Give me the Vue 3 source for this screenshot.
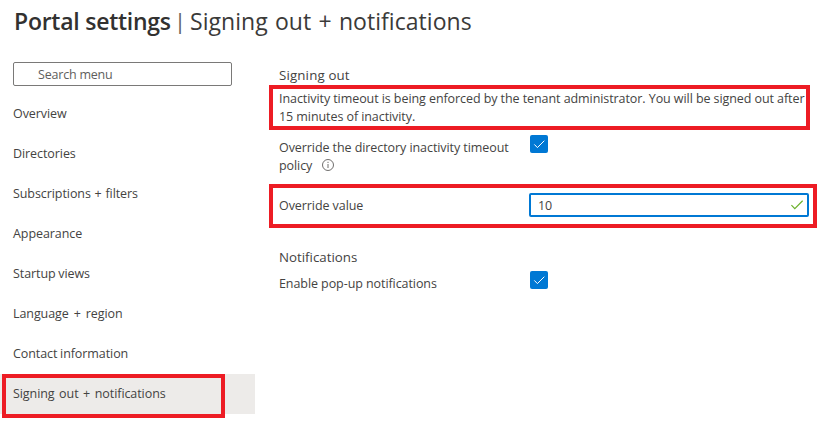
<script setup>
import { ref } from 'vue'

const menu = [
  { label: 'Overview', gap: 0 },
  { label: 'Directories', gap: 0 },
  { label: 'Subscriptions + filters', gap: 0.6 },
  { label: 'Appearance', gap: 0 },
  { label: 'Startup views', gap: -0.5 },
  { label: 'Language + region', gap: 1.8 },
  { label: 'Contact information', gap: -0.5 },
  { label: 'Signing out + notifications', gap: 1.4 },
]
const active = ref('Signing out + notifications')
</script>

<template>
  <div class="page">
    <h1 class="title">
      <strong>Portal settings</strong><span class="bar">|</span><span class="sub">Signing out + notifications</span>
    </h1>
    <div class="body">
      <nav class="side">
        <div class="search">Search menu</div>
        <div
          v-for="item in menu"
          :key="item.label"
          class="item"
          :class="{ active: item.label === active }"
          @click="active = item.label"
        >
          <span :style="{ wordSpacing: item.gap + 'px' }">{{ item.label }}</span>
          <i v-if="item.label === active" class="mark mark-menu"></i>
        </div>
      </nav>

      <main class="main">
        <h2 class="heading first">Signing out</h2>
        <p class="notice">
          Inactivity timeout is being enforced by the tenant administrator. You will be signed out after<br />
          15 minutes of inactivity.
          <i class="mark mark-notice"></i>
        </p>
        <div class="row policy">
          <div class="label">
            Override the directory inactivity timeout<br />policy
            <svg class="info" viewBox="0 0 12 12">
              <circle cx="6" cy="6" r="5.5" />
              <path d="M6 5v4M6 2.8v1.2" />
            </svg>
          </div>
          <div class="check">
            <svg viewBox="0 0 18 18"><path d="M4.3 9.4l3.1 3.2 6.9-6.9" /></svg>
          </div>
        </div>
        <div class="row override">
          <div class="label">Override value</div>
          <div class="field">
            <span>10</span>
            <svg viewBox="0 0 12 10"><path d="M.4 5.1l3.4 3.5L11.6.7" /></svg>
          </div>
          <i class="mark mark-value"></i>
        </div>
        <h2 class="heading second">Notifications</h2>
        <div class="row popup">
          <div class="label">Enable pop-up notifications</div>
          <div class="check">
            <svg viewBox="0 0 18 18"><path d="M4.3 9.4l3.1 3.2 6.9-6.9" /></svg>
          </div>
        </div>
      </main>
    </div>
  </div>
</template>

<style>
body {
  margin: 0;
  background: #fff;
}
</style>

<style scoped>
.page {
  box-sizing: border-box;
  width: 821px;
  height: 428px;
  overflow: hidden;
  background: #fff;
  color: #444342;
  font: 12.5px/18px 'Open Sans', 'Noto Sans', sans-serif;
  letter-spacing: -0.075px;
}
.title {
  display: flex;
  height: 62px;
  margin: 0;
  padding: 5px 0 0 14px;
  box-sizing: border-box;
  font-size: 23px;
  font-weight: 400;
  line-height: 32px;
  white-space: nowrap;
  color: #323130;
}
.title strong {
  width: 160px;
  font-weight: 600;
  letter-spacing: -0.25px;
}
.bar {
  width: 16px;
  font-size: 22px;
  line-height: 30px;
  color: #605e5c;
}
.sub {
  color: #3b3a39;
  letter-spacing: 0.05px;
  word-spacing: 1.2px;
}
.body {
  display: flex;
}
.side {
  width: 255px;
}
.search {
  box-sizing: border-box;
  width: 219px;
  height: 24px;
  margin: 0 0 8px 13px;
  padding-left: 24px;
  border: 1px solid #7a7978;
  border-radius: 2px;
  line-height: 23px;
  letter-spacing: -0.2px;
  color: #605e5c;
}
.item {
  position: relative;
  height: 40px;
  padding-left: 13px;
  line-height: 39px;
  white-space: nowrap;
}
.item.active {
  background: #edebe9;
}
.mark {
  position: absolute;
  box-sizing: border-box;
  border: 4px solid #ed1c24;
  pointer-events: none;
}
.mark-menu {
  left: 2px;
  top: 0;
  width: 223px;
  height: 44px;
}
.main {
  width: 542px;
  padding: 4px 0 0 24px;
}
.heading {
  margin: 0;
  font-size: 13.3px;
  font-weight: 400;
  line-height: 19px;
  letter-spacing: 0;
}
.first {
  letter-spacing: 0.15px;
}
.notice {
  position: relative;
  height: 49px;
  margin: 5px 0 0;
  white-space: nowrap;
}
.mark-notice {
  left: -10px;
  top: -5px;
  width: 541px;
  height: 45px;
}
.row {
  position: relative;
  display: flex;
}
.label {
  width: 251px;
  white-space: nowrap;
}
.policy {
  height: 54px;
}
.info {
  width: 12px;
  height: 12px;
  margin-left: 7px;
  vertical-align: -1px;
  fill: none;
  stroke: #605e5c;
  stroke-width: 0.9;
}
.check {
  width: 18px;
  height: 18px;
  margin-top: -4px;
  border-radius: 2px;
  background: #0078d4;
}
.check svg {
  display: block;
  width: 18px;
  height: 18px;
  fill: none;
  stroke: #fff;
  stroke-width: 1;
}
.override {
  height: 24px;
  line-height: 26px;
}
.field {
  display: flex;
  box-sizing: border-box;
  align-items: center;
  justify-content: space-between;
  width: 280px;
  height: 24px;
  margin-left: -1px;
  padding: 0 4px 0 7px;
  border: 2px solid #0078d4;
  border-radius: 2px;
}
.field span {
  padding-top: 1px;
}
.field svg {
  width: 12px;
  height: 10px;
  fill: none;
  stroke: #6bb12c;
  stroke-width: 1.2;
}
.mark-value {
  left: -10px;
  top: -9px;
  width: 548px;
  height: 44px;
}
.second {
  margin-top: 31px;
}
.popup {
  margin-top: 8px;
}
</style>
